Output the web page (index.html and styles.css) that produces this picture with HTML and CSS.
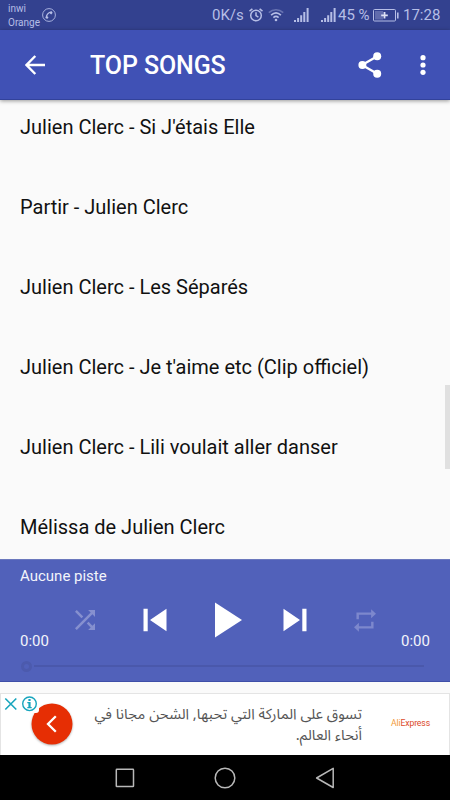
FILE: index.html
```html
<!DOCTYPE html>
<html lang="fr">
<head>
<meta charset="utf-8">
<title>Top Songs</title>
<link rel="stylesheet" href="styles.css">
</head>
<body>
<div class="phone">
  <div class="status">
    <div class="carriers"><span>inwi</span><span>Orange</span></div>
    <svg class="call" width="14" height="14" viewBox="0 0 14 14" fill="none" stroke="currentColor"><circle cx="7" cy="7" r="6.4" stroke-width=".9"/><path d="M4.4 10.2C3.9 7.2 6 4.2 9.8 3.9" stroke-width="1.3"/><path d="M4.3 10.3l1.3-1.8M9.9 3.9L8.3 5.7" stroke-width="2.3"/></svg>
    <span class="rate">0K/s</span>
    <svg class="alarm" width="14" height="14" viewBox="0 0 14 14" fill="none" stroke="currentColor" stroke-width="1.5"><circle cx="7" cy="7.5" r="5.3"/><path d="M7 4.2v3.5l2.4 1.5M.5 3.2L3.4.8M13.5 3.2L10.6.8"/></svg>
    <svg class="wifi" width="16" height="14" viewBox="0 0 16 14" fill="none" stroke="currentColor" stroke-width="1.6"><path d="M.8 4.7C5 .7 11 .7 15.2 4.7" opacity=".4"/><path d="M3.1 7.2c3-2.8 6.8-2.8 9.8 0M5.4 9.6c1.6-1.5 3.6-1.5 5.2 0"/><circle cx="8" cy="12" r="1.3" fill="currentColor" stroke="none"/></svg>
    <svg class="signal first" width="15" height="14" viewBox="0 0 15 14" fill="currentColor"><path d="M0 12h2v2H0zM3.1 10h2v4h-2zM6.2 7.3h2V14h-2zM9.3 4h2v10h-2zM12.6 0h2v14h-2z"/></svg>
    <svg class="signal second" width="15" height="14" viewBox="0 0 15 14" fill="currentColor"><path d="M0 12h2v2H0zM3.1 10h2v4h-2zM6.2 7.3h2V14h-2zM9.3 4h2v10h-2zM12.6 0h2v14h-2z"/></svg>
    <span class="percent">45 %</span>
    <svg class="battery" width="26" height="13" viewBox="0 0 26 13"><rect x=".5" y=".5" width="22" height="11.5" rx="1" fill="none" stroke="currentColor"/><path d="M2 2h8v8.5H2z" fill="currentColor" opacity=".35"/><path d="M24 3.5h1.6v6H24z" fill="currentColor"/><path d="M11.5 3v6.6M8.2 6.3h6.6" stroke="#dde1f5" stroke-width="1.8"/></svg>
    <span class="clock">17:28</span>
  </div>

  <header class="appbar">
    <svg class="back" width="20" height="20" viewBox="0 0 20 20" fill="none" stroke="#fff" stroke-width="2.4"><path d="M20 10H1.8M10.3 1L1.5 10l8.8 9"/></svg>
    <h1>TOP SONGS</h1>
    <svg class="share" width="24" height="26" viewBox="0 0 24 26"><path d="M19.3 4.2L4 13l15.3 8.8" fill="none" stroke="#fff" stroke-width="2.3"/><g fill="#fff"><circle cx="19.2" cy="4.3" r="4"/><circle cx="4.4" cy="13" r="4"/><circle cx="19.2" cy="21.7" r="4"/></g></svg>
    <svg class="more" width="6" height="22" viewBox="0 0 6 22" fill="#fff"><circle cx="3" cy="3.7" r="2.6"/><circle cx="3" cy="11" r="2.6"/><circle cx="3" cy="18.3" r="2.6"/></svg>
  </header>

  <main class="list">
    <ul>
      <li>Julien Clerc - Si J'étais Elle</li>
      <li>Partir - Julien Clerc</li>
      <li>Julien Clerc - Les Séparés</li>
      <li>Julien Clerc - Je t'aime etc (Clip officiel)</li>
      <li>Julien Clerc - Lili voulait aller danser</li>
      <li>Mélissa de Julien Clerc</li>
    </ul>
    <div class="thumb"></div>
  </main>

  <section class="player">
    <div class="track">Aucune piste</div>
    <div class="controls">
      <span class="time">0:00</span>
      <svg class="shuffle" width="20" height="20" viewBox="4 4 16 16" fill="#8690cf"><path d="M10.59 9.17L5.41 4 4 5.41l5.17 5.17 1.42-1.41zM14.5 4l2.04 2.04L4 18.59 5.41 20 17.96 7.46 20 9.5V4h-5.5zm.33 9.41l-1.41 1.41 3.13 3.13L14.5 20H20v-5.5l-2.04 2.04-3.13-3.13z"/></svg>
      <svg class="prev" width="24" height="24" viewBox="0 0 24 24" fill="#fff"><path d="M.5.7h4.2v22.6H.5zM23.5.7v22.6L7 12z"/></svg>
      <svg class="play" width="28" height="36" viewBox="0 0 28 36" fill="#fff"><path d="M0 .5v35L27 18z"/></svg>
      <svg class="next" width="24" height="24" viewBox="0 0 24 24" fill="#fff"><path d="M19.3.7h4.2v22.6h-4.2zM.5.7v22.6L17 12z"/></svg>
      <svg class="repeat" width="22" height="25" viewBox="3 1 18 22" preserveAspectRatio="none" fill="#7d88cd"><path d="M7 7h10v3l4-4-4-4v3H5v6h2V7zm10 10H7v-3l-4 4 4 4v-3h12v-6h-2v4z"/></svg>
      <span class="time">0:00</span>
    </div>
    <div class="seek"><i class="knob"></i><i class="rail"></i></div>
  </section>

  <section class="ad">
    <div class="ad-action">
      <svg class="go" width="42" height="44" viewBox="0 0 42 44"><circle cx="21" cy="22" r="20.5" fill="#e62e04"/><path d="M24.8 14.2L17 22l7.8 7.8" fill="none" stroke="#fff" stroke-width="2.3"/></svg>
      <svg class="choices" width="38" height="19" viewBox="0 0 38 19"><path d="M0 0h38v16q0 3-3 3H0z" fill="#fff"/><g fill="none" stroke="#18a5bd" stroke-width="1.6"><path d="M4.3 4.5l11 11M15.3 4.5l-11 11"/><circle cx="28.5" cy="9.8" r="6.8" stroke-width="1.4"/></g><path d="M27.4 5h2.2v2h-2.2zM26.3 8h3.3v5h1.1v1.3h-4.4V13h1.1V9.3h-1.1z" fill="#18a5bd"/></svg>
    </div>
    <p dir="rtl" lang="ar"><span>تسوق على الماركة التي تحبها, الشحن مجانا في</span><span>أنحاء العالم.</span></p>
    <div class="brand"><b>Ali</b>Express</div>
  </section>

  <nav class="nav">
    <svg width="20" height="22" viewBox="0 0 20 22"><rect x="1.3" y="2.3" width="17.2" height="17.2" rx=".6"/></svg>
    <svg width="22" height="22" viewBox="0 0 22 22"><circle cx="11" cy="11" r="9.8"/></svg>
    <svg width="20" height="22" viewBox="0 0 20 22"><path d="M18.2 1.3v19.2L1.6 11z" stroke-linejoin="round"/></svg>
  </nav>
</div>
</body>
</html>
```
FILE: styles.css
```css
* { box-sizing: border-box; }
body { margin: 0; font-family: Roboto, "Liberation Sans", sans-serif; }
svg { display: block; flex: none; }
.phone { width: 450px; height: 800px; display: flex; flex-direction: column; background: #fafafa; overflow: hidden; }

.status { height: 30px; flex: none; display: flex; align-items: center; background: #33418f; color: #b6bee6; padding-left: 8px; white-space: nowrap; }
.carriers { width: 34px; display: flex; flex-direction: column; font-size: 10px; line-height: 14px; padding-top: 2px; }
.call { margin-right: 156px; }
.rate { width: 32px; font-size: 15px; }
.alarm { margin: 0 5px; }
.wifi { margin-right: 10px; }
.signal.first { margin-right: 12px; }
.signal.second { margin-right: 2px; }
.percent { width: 35px; font-size: 15px; }
.clock { margin-left: 4px; font-size: 15px; }

.appbar { height: 70px; flex: none; display: flex; align-items: center; background: #4051b5; padding-left: 25px; box-shadow: 0 1px 4px rgba(0, 0, 0, .4); border-bottom: 1px solid #32429b; z-index: 1; position: relative; }
.appbar h1 { margin: 2px 0 0 45px; width: 268px; font-size: 25px; line-height: 30px; font-weight: 500; letter-spacing: -.1px; color: #fff; }
.more { margin-left: 37.5px; }

.list { height: 459px; flex: none; overflow: hidden; position: relative; }
.list ul { list-style: none; margin: -13px 0 0; padding: 0 20px; }
.list li { height: 80px; line-height: 80px; font-size: 20px; color: #111; white-space: nowrap; }
.thumb { position: absolute; right: 0; top: 285px; width: 5px; height: 84px; background: #e0e0e0; }

.player { height: 123px; flex: none; background: #5161ba; color: #f3f4fb; padding: 7px 20px 0; border-top: 1px solid #6b78bd; border-bottom: 1px solid #3f4fa8; }
.track { font-size: 15px; line-height: 18px; }
.controls { display: flex; height: 70px; align-items: center; }
.time { flex: none; font-size: 15px; width: 29px; line-height: 18px; align-self: flex-end; margin-bottom: 5px; }
.shuffle { margin-left: 26px; }
.prev { margin-left: 48px; }
.play { margin-left: 48px; }
.next { margin-left: 40px; }
.repeat { margin-left: 47px; margin-right: 25px; }
.seek { display: flex; align-items: center; height: 22px; }
.knob { width: 11px; height: 11px; border: 3px solid #4c5aad; border-radius: 50%; margin-left: 1px; }
.rail { width: 390px; height: 2px; margin-left: 2px; background: #4a58ab; }

.ad { height: 62px; flex: none; margin-top: 11px; display: flex; background: #fff; border: 1px solid #e4e4e4; border-bottom: 0; }
.ad-action { width: 90px; padding: 8px 0 0 30px; position: relative; }
.go { filter: drop-shadow(0 1px 1px rgba(0, 0, 0, .3)); }
.choices { position: absolute; left: 0; top: 0; }
.ad p { margin: 10px 0 0; width: 271px; font-family: "Noto Sans Arabic", "DejaVu Sans", sans-serif; font-size: 14.7px; line-height: 21px; color: #555; white-space: nowrap; }
.ad p span { display: block; height: 21px; }
.brand { margin: 23px 0 0 29px; font-size: 8.7px; line-height: 12px; letter-spacing: -.15px; color: #dc4a2b; }
.brand b { font-weight: 400; color: #f29a38; }

.nav { height: 45px; flex: none; background: #000; display: flex; align-items: center; justify-content: center; gap: 79px; }
.nav svg { fill: none; stroke: #b8b8b8; stroke-width: 1.5; }
```
